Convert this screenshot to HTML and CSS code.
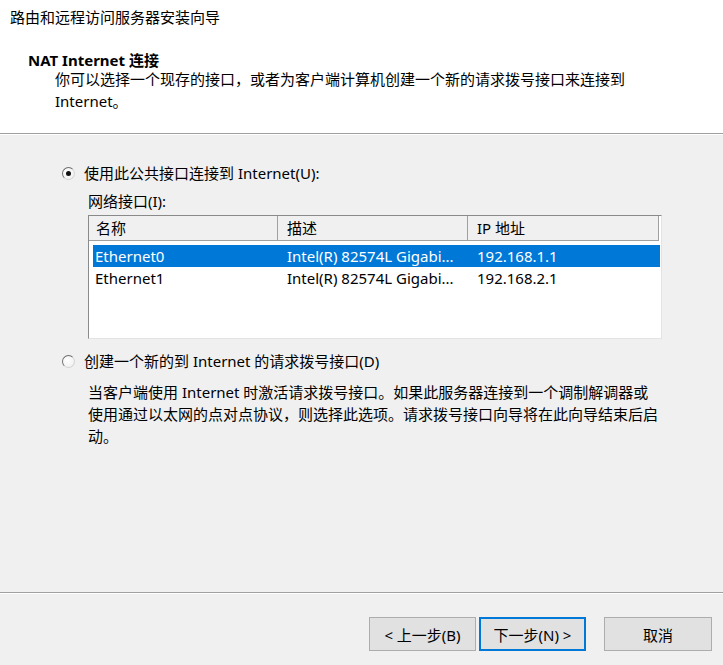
FILE: index.html
```html
<!DOCTYPE html>
<html lang="zh-CN">
<head>
<meta charset="utf-8">
<title>路由和远程访问服务器安装向导</title>
<link rel="stylesheet" href="styles.css">
</head>
<body>
<div class="header">
  <div class="app-title">路由和远程访问服务器安装向导</div>
  <div class="page-title">NAT Internet 连接</div>
  <div class="page-sub">你可以选择一个现存的接口，或者为客户端计算机创建一个新的请求拨号接口来连接到 Internet。</div>
</div>
<div class="content">
  <div class="option option-first">
    <span class="radio checked"></span>
    <span>使用此公共接口连接到 Internet(U):</span>
  </div>
  <div class="net-label">网络接口(I):</div>
  <div class="list">
    <div class="list-head">
      <div class="head-cell first">名称</div>
      <div class="head-cell">描述</div>
      <div class="head-cell">IP 地址</div>
    </div>
    <div class="list-body">
      <div class="row selected">
        <span>Ethernet0</span><span>Intel(R) 82574L Gigabi...</span><span>192.168.1.1</span>
      </div>
      <div class="row">
        <span>Ethernet1</span><span>Intel(R) 82574L Gigabi...</span><span>192.168.2.1</span>
      </div>
    </div>
  </div>
  <div class="option option-second">
    <span class="radio"></span>
    <span>创建一个新的到 Internet 的请求拨号接口(D)</span>
  </div>
  <p class="desc">当客户端使用 Internet 时激活请求拨号接口。如果此服务器连接到一个调制解调器或<br>使用通过以太网的点对点协议，则选择此选项。请求拨号接口向导将在此向导结束后启<br>动。</p>
</div>
<div class="footer">
  <button class="btn">&lt; 上一步(B)</button>
  <button class="btn btn-default">下一步(N) &gt;</button>
  <button class="btn btn-cancel">取消</button>
</div>
</body>
</html>
```
FILE: styles.css
```css
* { box-sizing: border-box; }

html, body { margin: 0; padding: 0; }

body {
  width: 723px;
  height: 665px;
  overflow: hidden;
  background: #f0f0f0;
  color: #000;
  font-family: "Noto Sans", "Noto Sans CJK SC", sans-serif;
  font-size: 15px;
  display: flex;
  flex-direction: column;
}

.header {
  background: #fff;
  height: 134px;
  flex: none;
  border-bottom: 1px solid #a0a0a0;
  box-shadow: 0 1px 0 #ffffff;
  padding: 6px 0 0 10px;
}

.app-title { line-height: 22px; }

.page-title {
  margin: 22px 0 0 18px;
  line-height: 20px;
  font-weight: bold;
}

.page-sub {
  margin: -2px 0 0 45px;
  width: 600px;
  line-height: 22px;
}

.content {
  flex: 1;
  padding-top: 28px;
}

.option {
  display: flex;
  align-items: center;
  margin-left: 62px;
  line-height: 22px;
  height: 22px;
}

.option-second { margin-top: 11px; }

.radio {
  width: 13px;
  height: 13px;
  margin-right: 9px;
  border-radius: 50%;
  border: 1px solid;
  border-color: #6e6e6e #d4d4d4 #d4d4d4 #6e6e6e;
  background: radial-gradient(circle at 40% 40%, #ffffff 0%, #f4f4f4 60%, #e6e6e6 100%);
  display: flex;
  align-items: center;
  justify-content: center;
  flex: none;
}

.radio.checked::after {
  content: "";
  width: 5px;
  height: 5px;
  border-radius: 50%;
  background: #111;
}

.net-label {
  margin: 6px 0 0 88px;
  line-height: 22px;
}

.list {
  margin: 3px 0 0 88px;
  width: 574px;
  height: 124px;
  background: #fff;
  border: 1px solid;
  border-color: #8a8a8a #e3e3e3 #e3e3e3 #8a8a8a;
}

.list-head {
  display: grid;
  grid-template-columns: 189px 190px 191px;
  height: 25px;
  background: #f0f0f0;
  border-bottom: 1px solid #a0a0a0;
  width: 570px;
}

.head-cell {
  line-height: 24px;
  padding-left: 9px;
  border-right: 1px solid #a0a0a0;
  white-space: nowrap;
}

.head-cell.first { padding-left: 7px; }

.list-body { padding: 4px 1px 0 4px; }

.row {
  display: grid;
  grid-template-columns: 192px 190px 1fr;
  height: 22px;
  line-height: 22px;
  white-space: nowrap;
}

.row span { padding-left: 2px; overflow: hidden; }

.row.selected {
  background: #0078d7;
  color: #fff;
}

.desc {
  margin: 9px 0 0 88px;
  line-height: 22px;
}

.footer {
  flex: none;
  height: 73px;
  border-top: 1px solid #a0a0a0;
  box-shadow: inset 0 1px 0 #ffffff;
  display: flex;
  justify-content: flex-end;
  align-items: flex-start;
  padding: 24px 11px 0 0;
}

.btn {
  width: 107px;
  height: 34px;
  font-family: "Noto Sans", "Noto Sans CJK SC", sans-serif;
  font-size: 15px;
  color: #000;
  background: #e1e1e1;
  border: 1px solid #adadad;
  padding: 0;
  margin: 0;
}

.btn-default {
  margin-left: 3px;
  border: 2px solid #0078d7;
}

.btn-cancel {
  margin-left: 18px;
  width: 108px;
}
```
